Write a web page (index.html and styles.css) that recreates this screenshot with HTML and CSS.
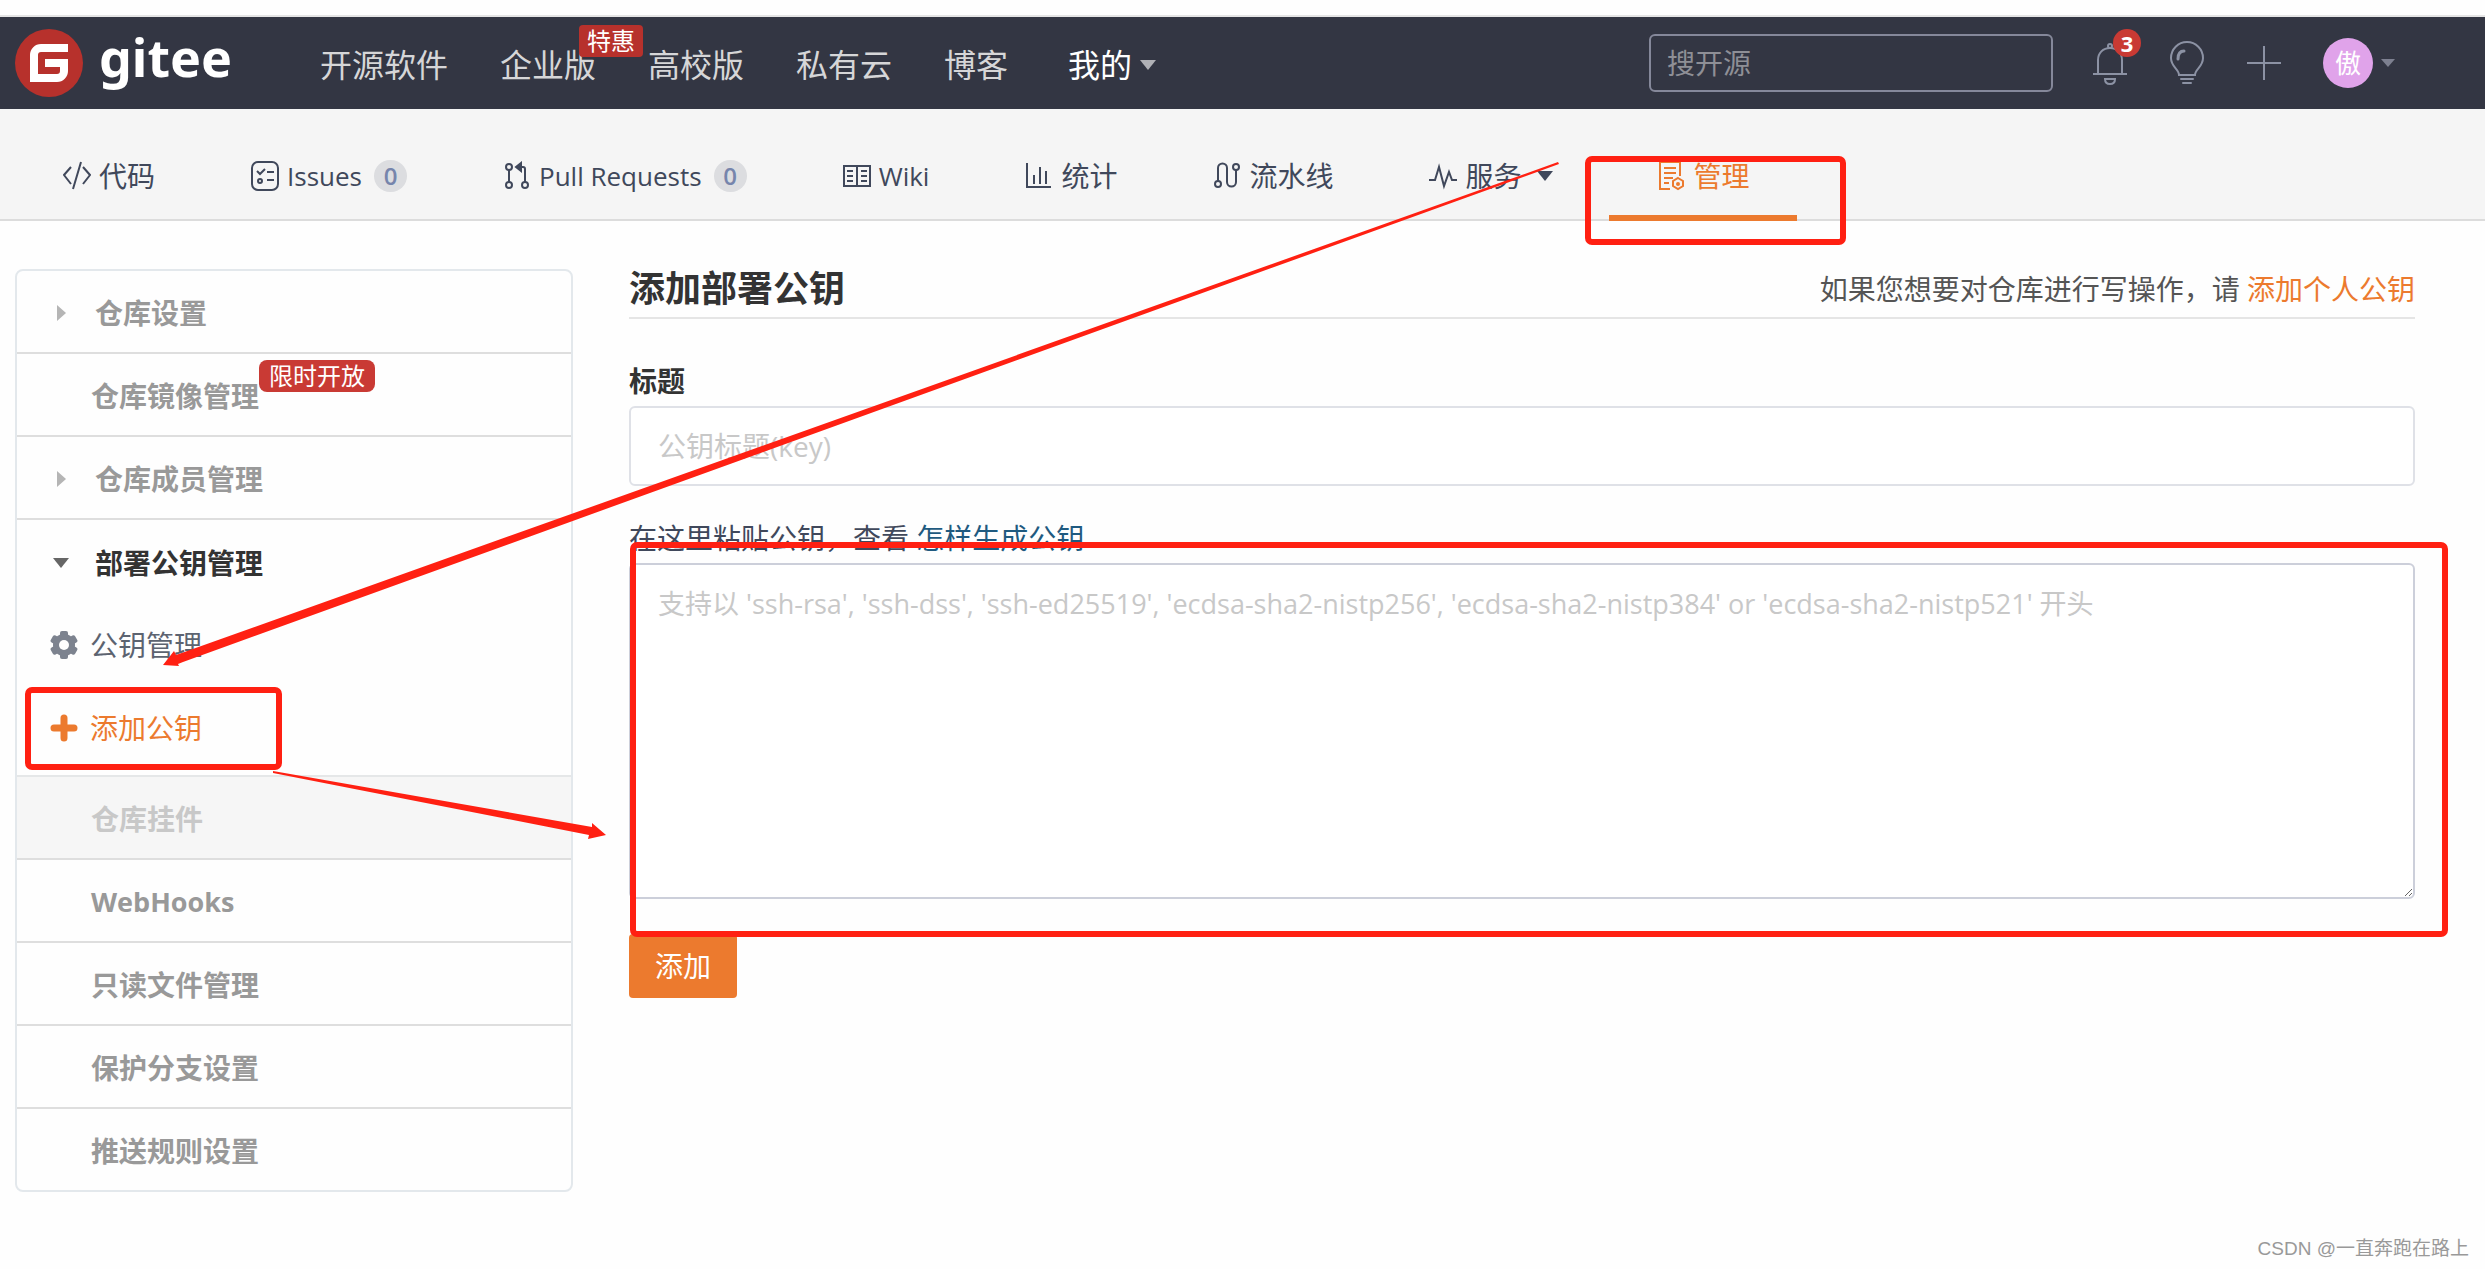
FILE: index.html
```html
<!DOCTYPE html>
<html lang="zh-CN">
<head>
<meta charset="utf-8">
<meta name="viewport" content="width=device-width, initial-scale=1">
<title>添加部署公钥 - Gitee</title>
<link rel="stylesheet" href="styles.css">
</head>
<body>
<header class="topbar">
  <a class="brand" href="#">
    <svg class="brand-mark" viewBox="0 0 68 68" aria-hidden="true"><circle cx="34" cy="34" r="34" fill="#b7312c"/><path d="M53 19H26a7 7 0 0 0-7 7v23h23a7 7 0 0 0 7-7v-8H30" fill="none" stroke="#fff" stroke-width="8"/></svg>
    <span class="brand-name">gitee</span>
  </a>
  <nav class="topnav">
    <a href="#">开源软件</a>
    <a href="#" class="has-badge">企业版<span class="promo">特惠</span></a>
    <a href="#">高校版</a>
    <a href="#">私有云</a>
    <a href="#">博客</a>
    <a href="#" class="current">我的<span class="caret"></span></a>
  </nav>
  <input class="search" type="search" placeholder="搜开源" aria-label="搜开源">
  <div class="tools">
    <button class="tool bell" aria-label="通知">
      <svg width="34" height="44" viewBox="0 0 34 44"><g fill="none" stroke="#8c92a4" stroke-width="2"><circle cx="17" cy="5" r="2"/><path d="M5 32V19c0-7 5-12 12-12s12 5 12 12v13M0 33h34M12 38h10c0 3-2 5-5 5s-5-2-5-5z"/></g></svg>
      <span class="count">3</span>
    </button>
    <button class="tool" aria-label="动态">
      <svg width="36" height="44" viewBox="0 0 36 44"><g fill="none" stroke="#8c92a4" stroke-width="2" stroke-linecap="round"><path d="M10 34c0-6-8-8-8-17a16 16 0 0 1 32 0c0 9-8 11-8 17zM12 38h12M14 42h8"/><path d="M9 18c0-5 2-8 6-8" stroke-width="3"/></g></svg>
    </button>
    <button class="tool" aria-label="新建">
      <svg width="34" height="34" viewBox="0 0 34 34"><path d="M0 17h34M17 0v34" stroke="#8c92a4" stroke-width="2"/></svg>
    </button>
    <button class="tool account" aria-label="账户"><span class="avatar">傲</span><span class="caret small"></span></button>
  </div>
</header>

<nav class="tabs">
  <a href="#"><svg class="ico" viewBox="0 0 28 30"><path d="M8 6 1 14l7 9M20 6l7 8-7 9M18 1 10 28"/></svg>代码</a>
  <a href="#" class="latin"><svg class="ico" viewBox="0 0 28 30"><rect x="1" y="1" width="26" height="28" rx="6"/><path d="m6 10 3 3 5-5M16 11h7M16 19h7"/><circle cx="9" cy="20" r="2"/></svg>Issues<span class="num">0</span></a>
  <a href="#" class="latin"><svg class="ico" viewBox="0 0 28 30"><circle cx="6" cy="6" r="3"/><circle cx="6" cy="24" r="3"/><circle cx="22" cy="24" r="3"/><path d="M6 9v12M22 21V8q0-2-2-2h-6"/><path d="m18 2-5 4 5 4z" fill="currentColor"/></svg>Pull Requests<span class="num">0</span></a>
  <a href="#" class="latin"><svg class="ico" viewBox="0 0 28 30"><path d="M1 5h26v20H1zM14 5v20M4 10h6M4 15h6M4 20h6M18 10h6M18 15h6M18 20h6"/></svg>Wiki</a>
  <a href="#"><svg class="ico" viewBox="0 0 28 30"><path d="M2 2v24h24M9 14v9M15 6v17M21 10v13"/></svg>统计</a>
  <a href="#"><svg class="ico" viewBox="0 0 28 30"><circle cx="5" cy="23" r="3"/><circle cx="23" cy="6" r="3"/><path d="M5 20V7a4 4 0 0 1 9 0v14a4 4 0 0 0 9 0V9"/></svg>流水线</a>
  <a href="#"><svg class="ico" viewBox="0 0 28 30"><path d="M0 19h6l4-13 5 19 5-14 3 8h5"/></svg>服务<span class="caret dark"></span></a>
  <a href="#" class="active"><svg class="ico" viewBox="0 0 28 30"><path d="M13 28H3V1h20v14M7 7h12M7 12h12M7 17h9M7 22h5"/><path d="m21 17 5 3v5l-5 3-5-3v-5z"/><circle cx="21" cy="23" r="1"/></svg>管理</a>
</nav>

<div class="page">
  <aside class="side">
    <a class="item" href="#"><span class="tri"></span>仓库设置</a>
    <a class="item" href="#">仓库镜像管理<span class="open-tag">限时开放</span></a>
    <a class="item" href="#"><span class="tri"></span>仓库成员管理</a>
    <div class="group">
      <a class="item open" href="#"><span class="tri down"></span>部署公钥管理</a>
      <a class="sub" href="#"><svg width="28" height="28" viewBox="0 0 28 28"><g fill="#7d838f"><rect x="10" width="8" height="28" rx="2"/><rect x="10" width="8" height="28" rx="2" transform="rotate(60 14 14)"/><rect x="10" width="8" height="28" rx="2" transform="rotate(120 14 14)"/><circle cx="14" cy="14" r="11"/></g><circle cx="14" cy="14" r="5" fill="#fff"/></svg>公钥管理</a>
      <a class="sub selected" href="#"><svg width="28" height="28" viewBox="0 0 28 28"><path d="M14 4v20M4 14h20" stroke="#ec7a2e" stroke-width="7" stroke-linecap="round"/></svg>添加公钥</a>
    </div>
    <a class="item disabled" href="#">仓库挂件</a>
    <a class="item latin" href="#">WebHooks</a>
    <a class="item" href="#">只读文件管理</a>
    <a class="item" href="#">保护分支设置</a>
    <a class="item" href="#">推送规则设置</a>
  </aside>

  <main class="content">
    <div class="heading">
      <h1>添加部署公钥</h1>
      <p>如果您想要对仓库进行写操作，请 <a href="#">添加个人公钥</a></p>
    </div>
    <form class="form">
      <label class="title-label" for="key-title">标题</label>
      <input id="key-title" class="field" type="text" placeholder="公钥标题(key)">
      <div class="key-label"><label for="key-body">在这里粘贴公钥，查看</label> <a href="#">怎样生成公钥</a></div>
      <textarea id="key-body" class="field area" placeholder="支持以 'ssh-rsa', 'ssh-dss', 'ssh-ed25519', 'ecdsa-sha2-nistp256', 'ecdsa-sha2-nistp384' or 'ecdsa-sha2-nistp521' 开头"></textarea>
      <button class="submit" type="button">添加</button>
    </form>
  </main>
</div>
<footer class="credit">CSDN @一直奔跑在路上</footer>

<svg class="marks" width="2485" height="1269" viewBox="0 0 2485 1269" aria-hidden="true">
  <g fill="none" stroke="#ff2012" stroke-width="6">
    <rect x="1588" y="159" width="255" height="83" rx="4"/>
    <rect x="28" y="690" width="251" height="77" rx="4"/>
    <rect x="633" y="545" width="1812" height="389" rx="4"/>
  </g>
  <g fill="#ff2012">
    <path d="M1558 162 176 655l-2-4-11 14 16 1-1-2 5-2L1559 164z"/>
    <path d="m273 771 319 56 0-4 14 12-18 4 1-4L273 773z"/>
  </g>
</svg>
</body>
</html>
```
FILE: styles.css
```css
* { box-sizing: border-box; }

body {
  margin: 0;
  min-height: 100vh;
  display: flex;
  flex-direction: column;
  position: relative;
  overflow-x: hidden;
  background: #fefefe;
  color: #40485b;
  font: 28px/40px "Open Sans", "Noto Sans CJK SC", sans-serif;
}

a { color: inherit; text-decoration: none; }
button, input, textarea { font: inherit; }

/* Top bar */
.topbar {
  display: flex;
  align-items: center;
  height: 94px;
  margin-top: 15px;
  padding: 0 90px 0 15px;
  border-top: 2px solid #e5e5e5;
  background: #333643;
}

.brand { display: flex; align-items: center; gap: 16px; width: 305px; }
.brand-mark { width: 68px; height: 68px; }
.brand-name { color: #fff; font: bold 52px/68px "Noto Sans", sans-serif; padding-bottom: 12px; }

.topnav { display: flex; gap: 52px; padding-top: 4px; font-size: 32px; color: #d6d6d8; }
.has-badge { position: relative; }
.promo {
  position: absolute;
  left: 79px;
  top: -20px;
  padding: 0 8px;
  border-radius: 4px;
  background: #b7312c;
  color: #fff;
  font-size: 24px;
  line-height: 32px;
  white-space: nowrap;
}
.current { color: #fff; display: flex; align-items: center; gap: 8px; margin-left: 8px; }

.caret {
  border: 8px solid transparent;
  border-top: 10px solid #b0b1b6;
  border-bottom: 0;
}
.caret.small { border-width: 8px 7px 0; border-top-color: #7d8090; }
.caret.dark { border-top-color: #40485b; margin-left: 8px; }

.search {
  width: 404px;
  height: 58px;
  margin-left: auto;
  padding: 0 16px;
  border: 2px solid #85889a;
  border-radius: 6px;
  background: transparent;
  color: #fff;
}
.search::placeholder { color: #8e8f96; opacity: 1; }

.tools { display: flex; align-items: center; gap: 42px; margin-left: 40px; }
.tool {
  display: flex;
  align-items: center;
  gap: 8px;
  padding: 0;
  border: 0;
  background: none;
  position: relative;
}
.count {
  position: absolute;
  left: 20px;
  top: -12px;
  width: 28px;
  height: 28px;
  border-radius: 50%;
  background: #c93a34;
  color: #fff;
  font-size: 22px;
  font-weight: bold;
  line-height: 28px;
}
.avatar {
  width: 50px;
  height: 50px;
  border-radius: 50%;
  background: #e0a3ea;
  color: #fff;
  font-size: 26px;
  line-height: 50px;
}

/* Repository tabs */
.tabs {
  display: flex;
  height: 112px;
  padding: 0 15px;
  border-bottom: 2px solid #dcdcdc;
  background: #f5f5f5;
}
.tabs a {
  display: flex;
  align-items: center;
  gap: 8px;
  padding: 28px 48px 0;
  margin-bottom: -2px;
  border-bottom: 6px solid transparent;
}
.tabs .latin { font-size: 26px; }
.tabs .active { color: #ec7a2e; border-color: #ec7a2e; margin-left: 8px; }
.ico {
  width: 28px;
  height: 30px;
  fill: none;
  stroke: currentColor;
  stroke-width: 2;
}
.num {
  min-width: 33px;
  margin-left: 4px;
  border-radius: 16px;
  background: #dcdde0;
  color: #7685ac;
  font-size: 24px;
  font-weight: 600;
  line-height: 32px;
  text-align: center;
}

/* Body columns */
.page { display: flex; align-items: flex-start; gap: 56px; padding: 48px 70px 0 15px; }

.side {
  flex: 0 0 558px;
  border: 2px solid #e3e8ec;
  border-radius: 8px;
  color: #999;
  font-weight: bold;
}
.item {
  display: flex;
  align-items: center;
  height: 83px;
  padding: 2px 0 0 74px;
  border-bottom: 2px solid #dedede;
}
.item.latin { font-size: 27px; }
.side > .item:last-child { height: 81px; border-bottom: 0; }
.tri {
  width: 9px;
  margin: 0 29px 0 -34px;
  border: 8px solid transparent;
  border-left: 9px solid #b5b5b5;
  border-right: 0;
}
.tri.down {
  width: 16px;
  margin: 0 26px 0 -38px;
  border: 8px solid transparent;
  border-top: 10px solid #666;
  border-bottom: 0;
}
.item.open { color: #333; border-bottom: 0; }
.group { border-bottom: 2px solid #e5e7e8; padding-bottom: 6px; }
.sub {
  display: flex;
  align-items: center;
  gap: 12px;
  height: 83px;
  padding-left: 33px;
  color: #5c6370;
  font-weight: normal;
}
.sub.selected { color: #ec7a2e; }
.item.disabled { background: #f6f6f6; color: #c8c8c8; }
.open-tag {
  align-self: flex-start;
  margin-top: 4px;
  padding: 0 10px;
  border-radius: 8px;
  background: #c93a34;
  color: #fff;
  font-size: 24px;
  font-weight: normal;
  line-height: 32px;
}

.content { flex: 1; min-width: 0; }
.heading {
  display: flex;
  align-items: center;
  justify-content: space-between;
  height: 50px;
  padding-bottom: 8px;
  border-bottom: 2px solid #e5e5e5;
}
h1 { margin: 0; color: #333; font-size: 36px; line-height: 40px; }
.heading p { margin: 0; color: #555; }
.heading a { color: #ec7a2e; }

.form { display: flex; flex-direction: column; align-items: flex-start; }
.title-label { margin-top: 42px; color: #333; font-weight: bold; }
.field {
  width: 100%;
  height: 80px;
  margin-top: 5px;
  padding: 0 27px;
  border: 2px solid #dfe1e7;
  border-radius: 6px;
  background: #fff;
  color: #333;
}
.field::placeholder { color: #c8c8c8; opacity: 1; }
.key-label { margin-top: 32px; }
.key-label a { color: #1f5a80; }
.area {
  height: 336px;
  padding-top: 19px;
  border-color: #cccfda;
  font-size: 27px;
  resize: vertical;
}
.submit {
  margin-top: 35px;
  padding: 12px 26px;
  border: 0;
  border-radius: 4px;
  background: #ec7a2e;
  color: #fff;
}

.credit {
  margin-top: auto;
  padding: 0 16px 4px;
  color: #999;
  font: 19px/32px "Liberation Sans", "Noto Sans CJK SC", sans-serif;
  text-align: right;
}

/* Annotations over the page */
.marks { position: absolute; left: 0; top: 0; pointer-events: none; }
```
